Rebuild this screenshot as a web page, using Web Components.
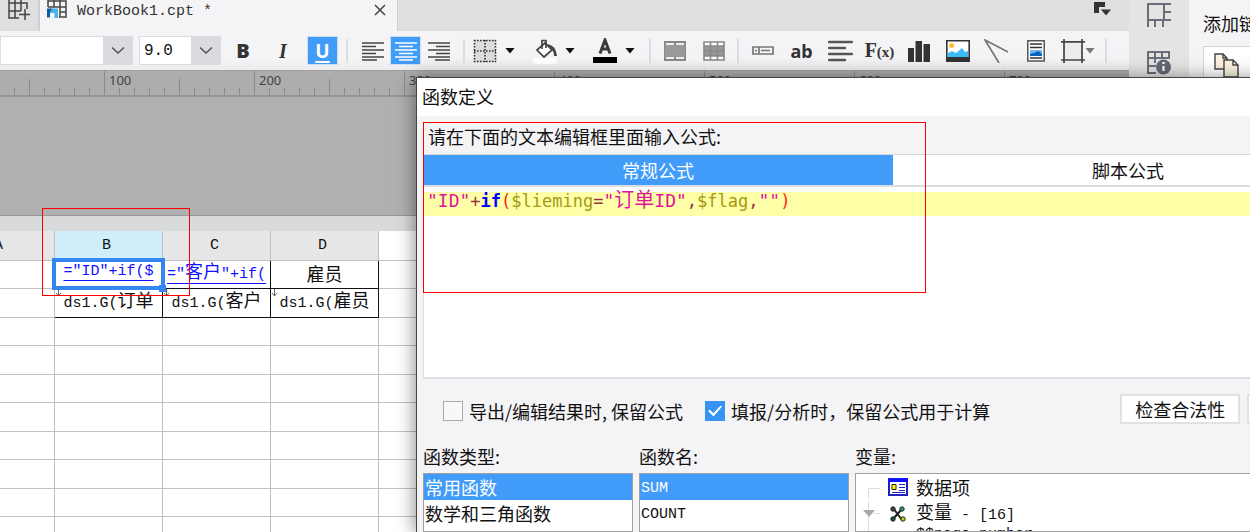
<!DOCTYPE html>
<html lang="zh-CN">
<head>
<meta charset="utf-8">
<title>WorkBook1.cpt</title>
<style>
html,body{height:100%;margin:0}
body{font:18px/24px "Noto Sans CJK SC",sans-serif;color:#111;overflow:hidden;
--mono:15px/24px "Liberation Mono","Noto Sans CJK SC",monospace;--panel:#f4f4f6;--accent:#419bf9}
</style>
</head>
<body>
<report-designer></report-designer>
<script>
const define=(name,html,setup)=>customElements.define(name,class extends HTMLElement{
  constructor(){
    super();
    this.attachShadow({mode:'open'}).innerHTML='<style>*{box-sizing:border-box}button{font:inherit;color:inherit;border:0;background:none;padding:0;margin:0}svg{display:block;flex:none}</style>'+html;
  }
  connectedCallback(){ if(setup) setup(this,this.shadowRoot); }
});

define('tool-button',`
<style>
:host{display:flex;flex:none;width:39px;height:100%;align-items:center;justify-content:center}
:host([kind=align]){width:33px}
:host([kind=text]){width:40px}
:host([kind=menu]){width:60px;justify-content:flex-start;padding-left:4px}
:host([kind=frame]){width:46px;justify-content:flex-start;padding-left:6px}
button{display:flex;align-items:center;justify-content:center;gap:8px;min-width:31px;height:29px}
:host([kind=frame]) button{gap:0}
:host([pressed]) button{background:var(--accent);border:1px solid #cfe0f2;color:#fff}
.caret{display:none;width:10px;height:6px;background:#111;clip-path:polygon(0 0,100% 0,50% 100%)}
:host([kind=menu]) .caret,:host([kind=frame]) .caret{display:block}
:host([kind=frame]) .caret{background:#777}
</style><button type="button"><slot></slot><i class="caret"></i></button>`,
(h,r)=>r.querySelector('button').setAttribute('aria-label',h.getAttribute('label')));

define('combo-box',`
<style>
:host{display:grid;flex:none;height:29px;border:1px solid #dcdde0;grid-template-columns:1fr 29px;background:#fff}
select,svg{grid-row:1}
select{grid-column:1/3;appearance:none;border:0;border-radius:0;background:none;padding:0 4px;font:16px "Liberation Mono",monospace;color:#111;min-width:0}
span{grid-column:2;grid-row:1;background:#dadbde;display:flex;align-items:center;justify-content:center;pointer-events:none}
</style><span><svg width="14" height="9"><path d="M1 1.500 7 7l6-5.500" fill="none" stroke="#555" stroke-width="1.600"/></svg></span><select></select>`,
(h,r)=>{const s=r.querySelector('select');s.setAttribute('aria-label',h.getAttribute('label'));s.add(new Option(h.getAttribute('value')||''));});

define('tab-bar',`
<style>
:host{display:flex;height:31px;background:#dedfe1;overflow:hidden}
.new{width:40px;display:flex;justify-content:center;padding:0 2px 0 0;border-right:2px solid #cfd0d2}
.tab{width:358px;display:flex;gap:10px;padding:0 10px 0 7px;background:var(--panel);border-right:1px solid #cfd0d2}
.name{flex:1;font:var(--mono);color:#333}
.close{height:20px}
.more{margin-left:auto;padding-right:16px;align-self:flex-start}
</style>
<button class="new" aria-label="新建"><svg width="24" height="20" fill="none" stroke="#444" stroke-width="1.500"><path d="M3 0V18H13M3 3H21V9M3 11H15M9 0V18M15 0V11M19 9V20M13 14.500H24"/></svg></button>
<div class="tab"><svg width="20" height="20" fill="none" stroke="#444" stroke-width="1.500"><path d="M1 7V0M1 1H19V17H12M1 7H19M7 0V7M13 0V17M13 12H19"/><path d="M0 8.500h6l-3 4v5H0z" fill="#0e5ba8" stroke="none"/><path d="M5 8.500h6V18H7.500v-5H3z" fill="#48b4ec" stroke="none"/></svg>
<span class="name">WorkBook1.cpt *</span>
<button class="close" aria-label="关闭"><svg width="14" height="14"><path d="M2 2 12 12M12 2 2 12" stroke="#444" stroke-width="1.500"/></svg></button></div>
<button class="more" aria-label="更多"><svg width="20" height="18"><path d="M1 2h11v5H6v6H1z" fill="#333"/><path d="M7 9h12l-6 7z" fill="#333" stroke="#dedfe1"/></svg></button>`);

define('format-toolbar',`
<style>
:host{display:flex;align-items:center;height:39px;background:linear-gradient(#f4f4f6 70%,#ececee);overflow:hidden}
.font{width:133px;margin-right:6px}
.size{width:82px;margin-right:2px}
.group{display:flex;height:100%;flex:none}
.align{padding:0 4px}
.menus{width:176px}
hr{flex:none;width:2px;height:24px;margin:0 4px;border:0;background:#dcdde0}
b{font:800 20px/24px "Open Sans",sans-serif;color:#333}
i.i{font:italic bold 20px/24px "Liberation Serif",serif;color:#333}
u{font:bold 19px/20px "Noto Sans",sans-serif;text-underline-offset:3px;text-decoration-thickness:2px}
.fx{font:bold 20px/24px "Liberation Serif",serif;color:#333}
.fx small{font-size:15px}
.ab{font:bold 18px/24px "Noto Sans",sans-serif;color:#333}
</style>
<combo-box class="font" label="字体"></combo-box><combo-box class="size" label="字号" value="9.0"></combo-box>
<div class="group"><tool-button kind="text" label="粗体"><b>B</b></tool-button><tool-button kind="text" label="斜体"><i class="i">I</i></tool-button><tool-button label="下划线" pressed><u>U</u></tool-button></div><hr>
<div class="group align">
<tool-button kind="align" label="左对齐"><svg width="22" height="20" stroke="#444" stroke-width="1.600"><path d="M0 2H22M0 5.500H14M0 9H22M0 12.500H14M0 16H22M0 19H15"/></svg></tool-button>
<tool-button kind="align" label="居中" pressed><svg width="22" height="20" stroke="#fff" stroke-width="1.600"><path d="M0 2H22M4 5.500H18M0 9H22M4 12.500H18M0 16H22M4 19H18"/></svg></tool-button>
<tool-button kind="align" label="右对齐"><svg width="22" height="20" stroke="#444" stroke-width="1.600"><path d="M0 2H22M8 5.500H22M0 9H22M8 12.500H22M0 16H22M7 19H22"/></svg></tool-button></div><hr>
<div class="group menus">
<tool-button kind="menu" label="边框"><svg width="24" height="24"><path d="M1 1H23V23H1z" fill="#dddde0"/><path d="M1 1.500H23M1 12H23M1 22.500H23M1.500 1V23M12 1V23M22.500 1V23" stroke="#333" stroke-width="1.600" stroke-dasharray="1.600 1.400"/></svg></tool-button>
<tool-button kind="menu" label="填充颜色"><svg width="24" height="26"><path d="M0 20H24V26H0z" fill="#fff"/><path d="M4 12 12 5 19 12 11 19z" fill="#fff" stroke="#444" stroke-width="1.700"/><path d="M9 11V2.500h4V10" fill="none" stroke="#444" stroke-width="1.700"/><path d="M14 6q9 1 10 12h-3q0-5-3-7z" fill="#444"/></svg></tool-button>
<tool-button kind="menu" label="字体颜色"><svg width="24" height="25"><path d="M0 19H24V25H0z" fill="#000"/><path d="M7 15.500 12 2 17 15.500M8.500 11H15.500" fill="none" stroke="#3c3c3c" stroke-width="3"/></svg></tool-button></div><hr>
<div class="group">
<tool-button label="合并单元格"><svg width="22" height="20"><path d="M1 1H21V19H1z" fill="#eee" stroke="#888" stroke-width="2"/><path d="M1 4H21V16H1z" fill="#999"/><path d="M11 0V4M11 16V20" stroke="#888" stroke-width="2"/></svg></tool-button>
<tool-button label="取消合并"><svg width="22" height="20"><path d="M1 1H21V19H1z" fill="#fff"/><path d="M1 5H21V15H1z" fill="#999"/><path d="M1 1H21V19H1zM1 5H21M1 10H21M1 15H21M7.500 1V19M14.500 1V19" fill="none" stroke="#888" stroke-width="1.600"/></svg></tool-button></div><hr>
<div class="group">
<tool-button label="控件"><svg width="22" height="9"><path d="M1 1H21V8H1zM7 1V8M9 4.500H18M3 4.500H5" fill="none" stroke="#777" stroke-width="1.700"/></svg></tool-button>
<tool-button label="文本"><span class="ab">ab</span></tool-button>
<tool-button label="富文本"><svg width="25" height="22" stroke="#555" stroke-width="2.400" stroke-linecap="round"><path d="M1 2H24M1 8H17M1 14H24M1 20H17"/></svg></tool-button>
<tool-button label="公式"><span class="fx">F<small>(x)</small></span></tool-button>
<tool-button label="图表"><svg width="22" height="22" fill="#333"><path d="M0 8H6V22H0zM7.500 1H14V22H7.500zM15.500 4H22V22H15.500z"/></svg></tool-button>
<tool-button label="图片"><svg width="24" height="22"><path d="M.8.800H23.200V21H.8z" fill="#fff" stroke="#333" stroke-width="1.600"/><circle cx="5.500" cy="5.500" r="2.500" fill="#fb3"/><path d="M1.500 17V13.500L6 11l4 2 6-5 3 4 3-1v6z" fill="#3cbcf8"/><path d="M0 17H24V22H0z" fill="#333"/></svg></tool-button>
<tool-button label="斜线"><svg width="25" height="24" fill="none" stroke="#777" stroke-width="1.700"><path d="M24 13 1 1 15 24"/></svg></tool-button>
<tool-button label="子报表"><svg width="18" height="22"><path d="M.8.800H17.200V21H.8z" fill="#fff" stroke="#555" stroke-width="1.500"/><path d="M3 4H15M3 7.500H15M3 18H15" stroke="#333" stroke-width="1.600"/><path d="M3 10H15V16H3z" fill="#6bb5f4"/><path d="M3 16V14l4-1 4-2 4 3v2z" fill="#0b64c0"/></svg></tool-button>
<tool-button kind="frame" label="悬浮元素"><svg width="24" height="24"><path d="M3 3H21V21H3z" fill="#ececee"/><path d="M0 2.800H24M0 21H24M3 0V24M21 0V24" stroke="#444" stroke-width="1.700"/></svg></tool-button></div><hr>`);

define('page-ruler',`
<style>
:host{display:flex;height:27px;overflow:hidden;border-top:1px solid #a0a0a0;border-bottom:2px solid #949494;
font:13px/18px "Noto Sans",sans-serif;color:#444;
background:repeating-linear-gradient(90deg,#8a8a8a 0 1px,transparent 1px 15px) 14px 100%/100% 7px no-repeat,
linear-gradient(90deg,#8a8a8a 1px,transparent 1px) 29px 100%/150px 16px repeat-x,#adadad}
span{flex:none;width:150px;padding-left:4px;border-left:1px solid #8a8a8a}
span:first-of-type{margin-left:104px}
</style><span>100</span><span>200</span><span>300</span><span>400</span><span>500</span><span>600</span><span>700</span>`);

define('report-sheet',`
<style>
:host{display:block;flex:1;overflow:hidden;background:#fff;border-top:1px solid #999}
.bar{height:15px;background:#d9dadc}
table{border-collapse:collapse;table-layout:fixed;width:1080px;margin-left:-54px;font:var(--mono)}
th,td{border:1px solid #c0c0c0;padding:0;text-align:center;vertical-align:middle;font-weight:normal;white-space:nowrap;overflow:hidden}
tr{height:28px}
tr:nth-child(even){height:29px}
thead tr{height:29px}
th{background:#e6e6e7;border-top:0;line-height:28px;padding:2px 4px 0 0;line-height:26px}
th.on{background:#d0eefa}
th.off{background:#fff;border:0}
td.c{border-color:#111}
td span{display:block;height:26px;line-height:26px;overflow:hidden}
td b{font:18px/24px "Noto Sans CJK SC",sans-serif}
.f span{color:#11f;text-decoration:underline;text-underline-offset:5px;line-height:22px}
.f b,.g b{line-height:18px}
.g span{line-height:20px}
.sel span{outline:4px solid #3486f0;outline-offset:-1px}
.sel{overflow:visible;position:relative}
.sel::after{content:"";position:absolute;z-index:2;right:-4px;bottom:-4px;width:7px;height:7px;background:#3486f0}
.g{position:relative}
.g svg{position:absolute;left:0;top:0}
</style>
<div class="bar"></div>
<table><colgroup><col style="width:108px"><col style="width:108px"><col style="width:108px"><col style="width:108px"><col></colgroup>
<thead><tr><th>A</th><th class="on">B</th><th>C</th><th>D</th><th class="off"></th></tr></thead>
<tbody></tbody></table>`,(h,r)=>{
  const down='<svg width="8" height="9"><path d="M3.500 0V7M1 4l2.500 3L6 4" fill="none" stroke="#666"/></svg>';
  const rows=[
   '<td></td><td class="c f sel"><span>="ID"+if($</span></td><td class="c f"><span>="<b>客户</b>"+if(</span></td><td class="c"><span><b>雇员</b></span></td><td></td>',
   '<td></td>'+['订单','客户','雇员'].map(t=>`<td class="c g">${down}<span>ds1.G(<b>${t}</b></span></td>`).join('')+'<td></td>'];
  while(rows.length<10) rows.push('<td></td>'.repeat(5));
  r.querySelector('tbody').innerHTML=rows.map(x=>`<tr>${x}</tr>`).join('');
});

define('side-strip',`
<style>:host{display:flex;flex-direction:column;align-items:center;gap:24px;width:60px;padding-top:3px;background:#e4e4e5}</style>
<button aria-label="单元格"><svg width="24" height="24" fill="none" stroke="#6b6d78" stroke-width="2"><path d="M1 24V1H24M1 17H24M17 1V17M17 9H24M8 17V24M16 17V24"/></svg></button>
<button aria-label="属性"><svg width="24" height="24" fill="none" stroke="#6b6d78" stroke-width="2"><path d="M9 22H1V1H22V8M1 7H22M1 15H9M8 1V12M15 1V8"/><circle cx="16.500" cy="16" r="7.500" fill="#666874" stroke="none"/><path d="M16.500 15V20M16.500 11V13" stroke="#fff" stroke-width="2.200"/></svg></button>`);

define('link-panel',`
<style>
:host{display:block;flex:1;min-width:0;overflow:hidden;background:var(--panel);padding:11px 0 0 14px;white-space:nowrap}
.box{margin-top:11px;height:60px;width:120px;padding:6px 10px;background:#fff;border:1px solid #d5d5d8}
</style>添加链接<div class="box"><svg width="26" height="26" fill="#fbf3df" stroke="#444" stroke-width="1.400"><path d="M1 1H9L13 5V16H1zM9 1V5H13"/><path d="M10 7H19L24 12V24H10zM19 7V12H24"/></svg></div>`);

define('fx-check',`
<style>
:host{display:block;flex:none}
label{display:flex;align-items:center;gap:6px;white-space:nowrap}
input{appearance:none;margin:0;width:20px;height:20px;border:1px solid #aaa;background:#f8f8f8;display:grid;place-items:center}
input:checked{background:#3894f2;border-color:#3894f2}
input:checked::before{content:"";width:14px;height:11px;background:#fff;clip-path:polygon(0 50%,12% 38%,38% 70%,90% 0,100% 10%,39% 100%)}
</style><label><input type="checkbox"><slot></slot></label>`,
(h,r)=>r.querySelector('input').checked=h.hasAttribute('checked'));

define('fx-list',`
<style>
:host{display:flex;flex-direction:column;min-width:0;min-height:0}
.cap{height:30px;line-height:26px}
.box{flex:1;border:1px solid #a0a0a0;background:#fff;overflow:hidden;min-height:0}
ul{margin:0;padding:0;list-style:none}
::slotted(li){height:26px;line-height:26px;padding-left:1px;list-style:none}
::slotted(li[aria-selected=true]){background:var(--accent);color:#fff}
::slotted(li.code){font:var(--mono);line-height:30px}
</style><div class="cap"></div><div class="box"><ul role="listbox"><slot></slot></ul></div>`,
(h,r)=>{const t=h.getAttribute('caption');r.querySelector('.cap').textContent=t;r.querySelector('ul').setAttribute('aria-label',t);});

define('fx-tree',`
<style>
:host{display:flex;flex-direction:column;min-width:0;min-height:0}
.cap{height:30px;line-height:26px}
.box{flex:1;border:1px solid #a0a0a0;background:#fff;overflow:hidden;padding:1px 0 0 6px;min-height:0}
.row{display:grid;grid-template-columns:18px 28px auto;justify-content:start;align-items:center;height:24px}
.row svg.i{margin-left:8px}
.row span{padding-left:8px}
.row .code{font:var(--mono);white-space:pre}
.row span span{padding:0}
</style><div class="cap">变量:</div><div class="box" role="tree">
<div class="row" role="treeitem"><svg width="18" height="24"><path d="M6.500 24V13.500H18" fill="none" stroke="#ddd"/></svg><svg class="i" width="20" height="18"><path d="M1 1H19V17H1z" fill="#fff" stroke="#2222bb" stroke-width="2"/><path d="M0 0H20V4H0z" fill="#11f"/><path d="M4 6.500H8V11.500H4z" fill="#ff0" stroke="#222"/><path d="M11 6.500H17M11 9.500H17M11 12.500H17M4 14.500H17" stroke="#2222bb"/></svg><span>数据项</span></div>
<div class="row" role="treeitem"><svg width="18" height="24"><path d="M6.500 0V24M12 11.500H18" stroke="#ddd"/><path d="M1 8H13L7 15z" fill="#aaa"/></svg><svg class="i" width="20" height="18"><path d="M5 3 14 15M14 4 5 14" stroke="#222" stroke-width="2"/><g stroke="#222" stroke-width="1"><circle cx="5" cy="4" r="2.200" fill="#535"/><circle cx="14" cy="4" r="2.200" fill="#298"/><circle cx="5" cy="14" r="2.200" fill="#253"/><circle cx="15" cy="14" r="2.200" fill="#cc1"/></g></svg><span>变量<span class="code"> - [16]</span></span></div>
<div class="row" role="treeitem"><svg width="18" height="24"><path d="M6.500 0V24" stroke="#ddd"/></svg><i></i><span class="code">$$page_number</span></div></div>`);

define('formula-editor',`
<style>
:host{display:block;height:192px;padding-top:5px;background:#fff;border:solid #dcdde0;border-width:0 0 2px 1px}
.line{height:24px;padding-left:3px;background:#ffffa8;white-space:pre;outline:0;
font:17px/14px "DejaVu Sans Mono",monospace;color:#934}
.s{color:#e0149c;font-size:18px}
.s b{font:20px/14px "Noto Sans CJK SC",sans-serif}
.k{color:#00f;font-weight:bold}
.p{color:#f22}
.v{color:#a39a10}
</style><div class="line" contenteditable="true" role="textbox" aria-label="公式" spellcheck="false"><span class="s">"ID"</span>+<span class="k">if</span><span class="p">(</span><span class="v">$lieming</span>=<span class="s">"<b>订单</b>ID"</span>,<span class="v">$flag</span>,<span class="s">""</span><span class="p">)</span></div>`);

define('formula-dialog',`
<style>
:host{display:flex;flex-direction:column;background:var(--panel);border:1px solid #444;border-bottom:0;box-shadow:0 2px 18px rgba(0,0,0,.5);overflow:hidden}
h1{margin:0;height:38px;flex:none;padding-left:5px;font:inherit;line-height:36px;background:#fff}
main{flex:1;min-height:0;display:flex;flex-direction:column;padding:0 6px}
.hint{flex:none;height:38px;line-height:40px;padding-left:5px}
nav{flex:none;display:flex;height:33px;border-top:1px solid #d5d6d9;border-bottom:2px solid #dcdde0}
nav button{flex:1;background:#fff}
nav button[aria-selected=true]{background:var(--accent);color:#fff}
formula-editor{flex:none}
.opts{flex:none;height:64px;display:flex;align-items:center;padding-left:20px}
.opts fx-check + fx-check{margin-left:22px}
.push{flex:none;height:30px;width:120px;border:2px solid #e0e1e3;background:#fff;margin-top:-4px;line-height:24px}
.first{margin-left:130px;margin-right:7px}
.lists{flex:1;min-height:0;display:grid;grid-template-columns:210px 210px 1fr;gap:6px}
</style>
<h1>函数定义</h1>
<main>
<div class="hint">请在下面的文本编辑框里面输入公式:</div>
<nav role="tablist"><button role="tab" aria-selected="true">常规公式</button><button role="tab" aria-selected="false">脚本公式</button></nav>
<formula-editor></formula-editor>
<div class="opts"><fx-check>导出/编辑结果时, 保留公式</fx-check><fx-check checked>填报/分析时，保留公式用于计算</fx-check><button class="push first">检查合法性</button><button class="push" aria-label="模拟计算"></button></div>
<div class="lists">
<fx-list caption="函数类型:"><li role="option" aria-selected="true">常用函数</li><li role="option">数学和三角函数</li><li role="option">文本函数</li></fx-list>
<fx-list caption="函数名:"><li role="option" class="code" aria-selected="true">SUM</li><li role="option" class="code">COUNT</li></fx-list>
<fx-tree></fx-tree>
</div></main>`);

define('report-designer',`
<style>
:host{display:flex;position:relative;height:100vh;overflow:hidden}
.work{flex:none;width:calc(100% - 121px);display:flex;flex-direction:column;background:#b0b0b0}
.work>*{flex:none}
.canvas{height:118px}
.work report-sheet{flex:1}
formula-dialog{position:absolute;left:416px;top:77px;bottom:0;width:954px}
.mark{position:absolute;border:1px solid #f00;pointer-events:none}
.cell{left:42px;top:208px;width:148px;height:88px}
.code{left:423px;top:122px;width:503px;height:171px}
</style>
<div class="work"><tab-bar></tab-bar><format-toolbar></format-toolbar><page-ruler></page-ruler><div class="canvas"></div><report-sheet></report-sheet></div>
<side-strip></side-strip><link-panel></link-panel>
<formula-dialog></formula-dialog>
<div class="mark cell"></div><div class="mark code"></div>`);
</script>
</body>
</html>
